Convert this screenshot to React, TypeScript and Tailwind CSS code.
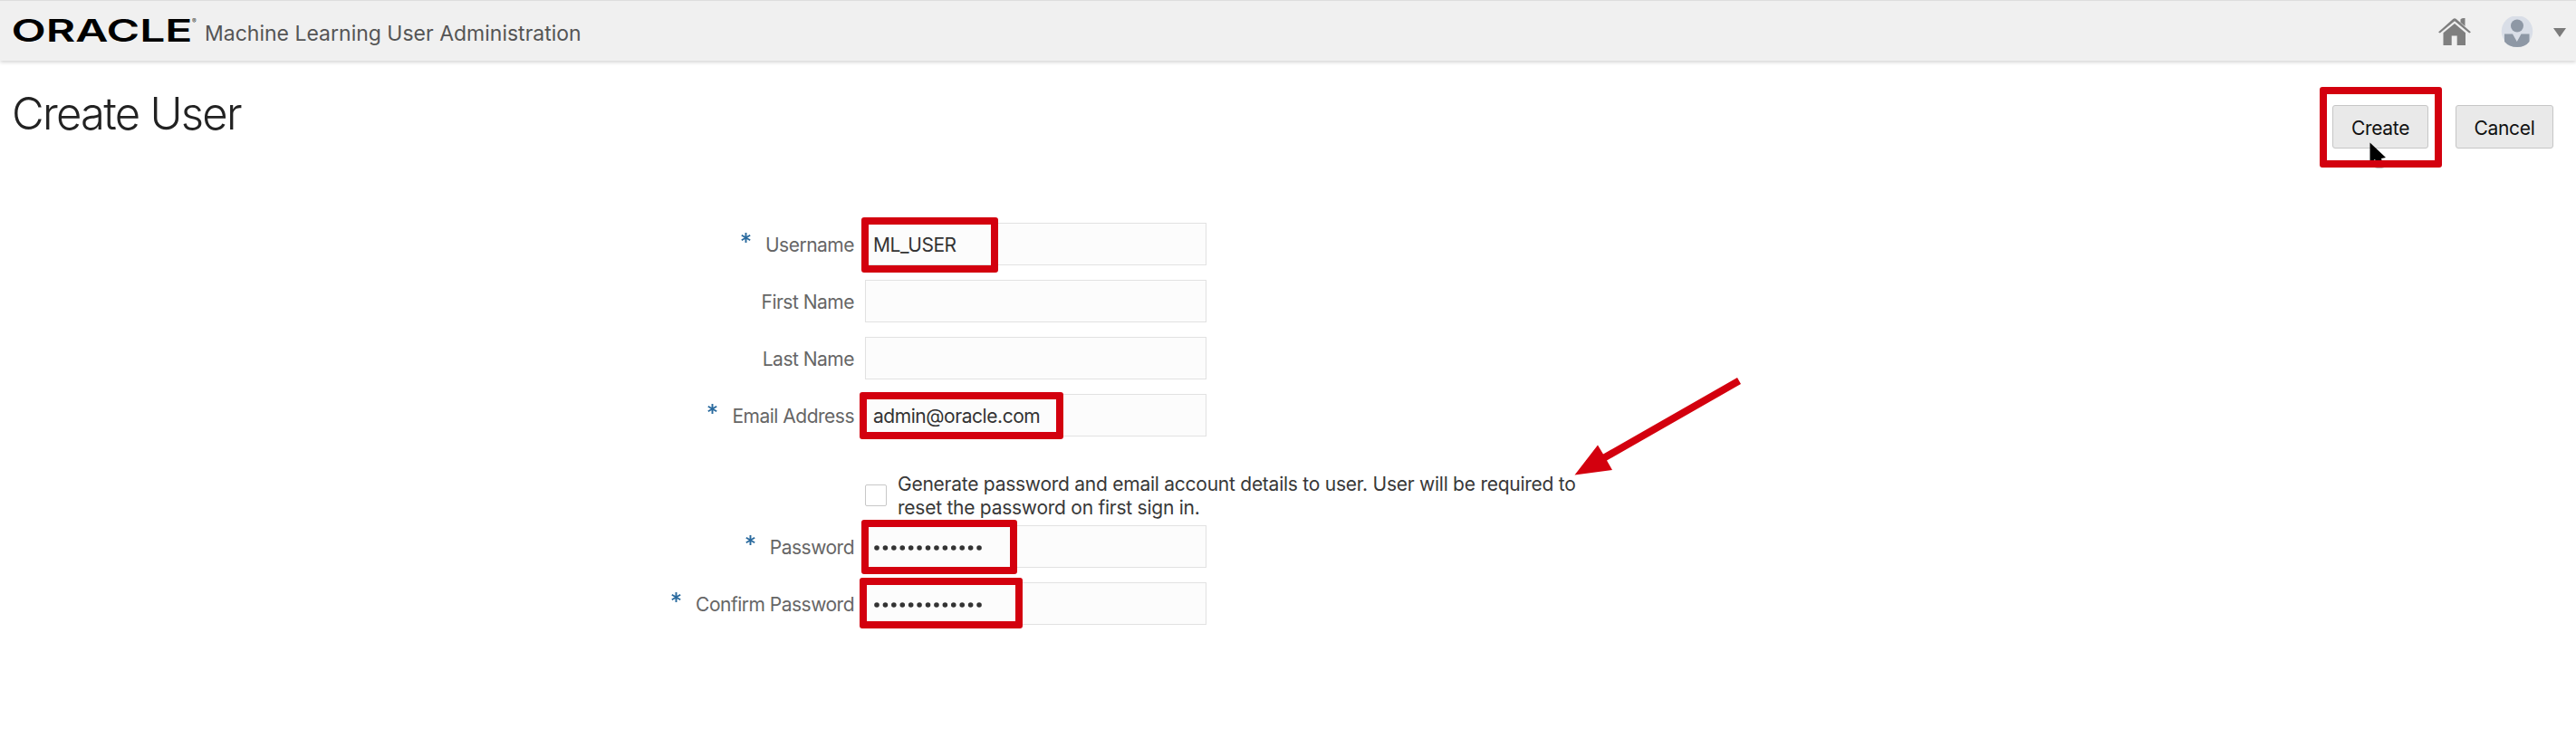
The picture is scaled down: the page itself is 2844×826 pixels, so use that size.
import type { ReactNode } from 'react';

type FieldProps = {
  label: string;
  required?: boolean;
  children?: ReactNode;
  highlight?: string;
};

const MARK = 'pointer-events-none absolute rounded-[3px] border-8 border-[#d3000e]';

function Field({ label, required, children, highlight }: FieldProps) {
  return (
    <div className="flex h-[47px] items-center">
      <div className="flex w-[943px] items-center justify-end">
        {required && (
          <svg className="mr-[16px] mb-[14px] h-[11px] w-[11px]" viewBox="0 0 11 11" stroke="#2a6a9e" strokeWidth="1.9">
            <path d="M5.5 0V11M0.8 2.8L10.2 8.2M10.2 2.8L0.8 8.2" />
          </svg>
        )}
        <label className="pt-[3px] text-[21px] leading-[26px] tracking-[-0.5px] whitespace-nowrap text-[#666]">{label}</label>
      </div>
      <div className="relative ml-[12px] flex h-[47px] w-[377px] items-center border border-[#e2e2e2] bg-[#fcfcfc] pl-[8px] text-[21px] leading-[26px] tracking-[-0.45px] text-[#333]">
        <span className="pt-[3px]">{children}</span>
        {highlight && <div className={`${MARK} ${highlight}`} />}
      </div>
    </div>
  );
}

function Dots() {
  return (
    <svg className="block h-[6px] w-[122px]" viewBox="0 0 122 6" fill="#333">
      {Array.from({ length: 13 }, (_, i) => (
        <circle key={i} cx={4 + i * 9.42} cy="3" r="2.8" />
      ))}
    </svg>
  );
}

function Header() {
  return (
    <header className="flex h-[67px] items-start border-t border-[#dedede] bg-[#f0f0f0] shadow-[0_2px_4px_rgba(0,0,0,0.16)]">
      <svg className="ml-[12px] h-[66px] w-[208px] shrink-0" viewBox="0 0 208 66" fontFamily="Inter, sans-serif">
        <text x="0.5" y="44.5" fontSize="34.5" fontWeight="600" textLength="200" lengthAdjust="spacingAndGlyphs" fill="#000">
          ORACLE
        </text>
        <text x="200" y="25" fontSize="7" fill="#333">®</text>
      </svg>
      <span className="mt-[20px] ml-[6px] text-[23px] leading-[32px] whitespace-nowrap text-[#555]">
        Machine Learning User Administration
      </span>
      <div className="ml-auto flex pt-[17px] pr-[11px]">
        <svg className="h-[34px] w-[36px]" viewBox="0 0 36 34" fill="#7f7f7f">
          <path d="M24.5 3.2Q26.5 1.5 29.5 2V11L24.5 6.8Z" />
          <path d="M0 17.5L16.2 3.1Q18 1.5 19.8 3.1L36 17.5L34.2 18.5L18 5.2L1.8 18.5Z" />
          <path d="M18 8L30 18.2V32H20.7V21.5H14.7V32H5.5V18.2Z" />
        </svg>
        <svg className="ml-[33px] h-[36px] w-[36px]" viewBox="0 0 36 36">
          <circle cx="18" cy="16.5" r="17.3" fill="#d9dee7" />
          <circle cx="18" cy="10.5" r="7" fill="#8e98a5" />
          <path d="M4 19.5H13L17.8 28L22.5 19.5H31.5V28Q27 34 18 34Q9 34 4 28Z" fill="#8e98a5" />
        </svg>
        <svg className="mt-[13px] ml-[22px] h-[10px] w-[14px]" viewBox="0 0 14 10" fill="#7b7b7b">
          <path d="M0 0H14L7 10Z" />
        </svg>
      </div>
    </header>
  );
}

const BUTTON =
  'h-[48px] rounded-[3px] border border-[#c6c6c6] bg-[#e9e9e9] pt-[3px] text-[21px] leading-[26px] tracking-[-0.3px] text-[#111]';

export default function App() {
  return (
    <div className="relative flex h-[826px] w-[2844px] flex-col overflow-hidden bg-white font-['Inter',sans-serif]">
      <Header />
      <div className="flex h-[179px] items-start justify-between pr-[25px] pl-[13px]">
        <h1 className="mt-[29px] text-[49px] leading-[60px] font-light tracking-[-1.75px] text-[#222]">Create User</h1>
        <div className="mt-[49px] flex">
          <div className="relative">
            <button className={`${BUTTON} block w-[106px]`}>Create</button>
            <svg className="absolute top-[41px] left-[40px] h-[30px] w-[22px]" viewBox="0 0 22 30">
              <ellipse cx="12" cy="27" rx="6" ry="2" fill="#bbb" />
              <path d="M1.5 0.5L19 17L14 18L16 25H10L7 19L1.5 23Z" fill="#000" />
            </svg>
            <div className={`${MARK} -top-[20px] -left-[14px] h-[89px] w-[135px]`} />
          </div>
          <button className={`${BUTTON} ml-[30px] w-[108px]`}>Cancel</button>
        </div>
      </div>
      <form className="flex flex-col">
        <div className="flex flex-col gap-[16px]">
          <Field label="Username" required highlight="-top-[7px] -left-[5px] h-[61px] w-[151px]">
            ML_USER
          </Field>
          <Field label="First Name" />
          <Field label="Last Name" />
          <Field label="Email Address" required highlight="-top-[3px] -left-[7px] h-[52px] w-[225px]">
            admin@oracle.com
          </Field>
        </div>
        <div className="mt-[42px] ml-[955px] flex h-[56px] items-start">
          <div className="mt-[11px] h-[24px] w-[24px] shrink-0 rounded-[2px] border border-[#c8c8c8] bg-white" />
          <p className="-mt-[2px] ml-[12px] text-[21px] leading-[25.5px] tracking-[-0.25px] whitespace-nowrap text-[#383838]">
            Generate password and email account details to user. User will be required to
            <br />
            reset the password on first sign in.
          </p>
        </div>
        <div className="flex flex-col gap-[16px]">
          <Field label="Password" required highlight="-top-[7px] -left-[5px] h-[60px] w-[172px]">
            <Dots />
          </Field>
          <Field label="Confirm Password" required highlight="-top-[6px] -left-[7px] h-[56px] w-[180px]">
            <Dots />
          </Field>
        </div>
      </form>
      <svg className="pointer-events-none absolute top-[416px] left-[1738px] h-[110px] w-[186px]" viewBox="0 0 186 110" fill="#d3000e">
        <path d="M180 1L184 8L36 92.5L42 103L0.5 108.5L26 75.5L32 85.5Z" />
      </svg>
    </div>
  );
}
